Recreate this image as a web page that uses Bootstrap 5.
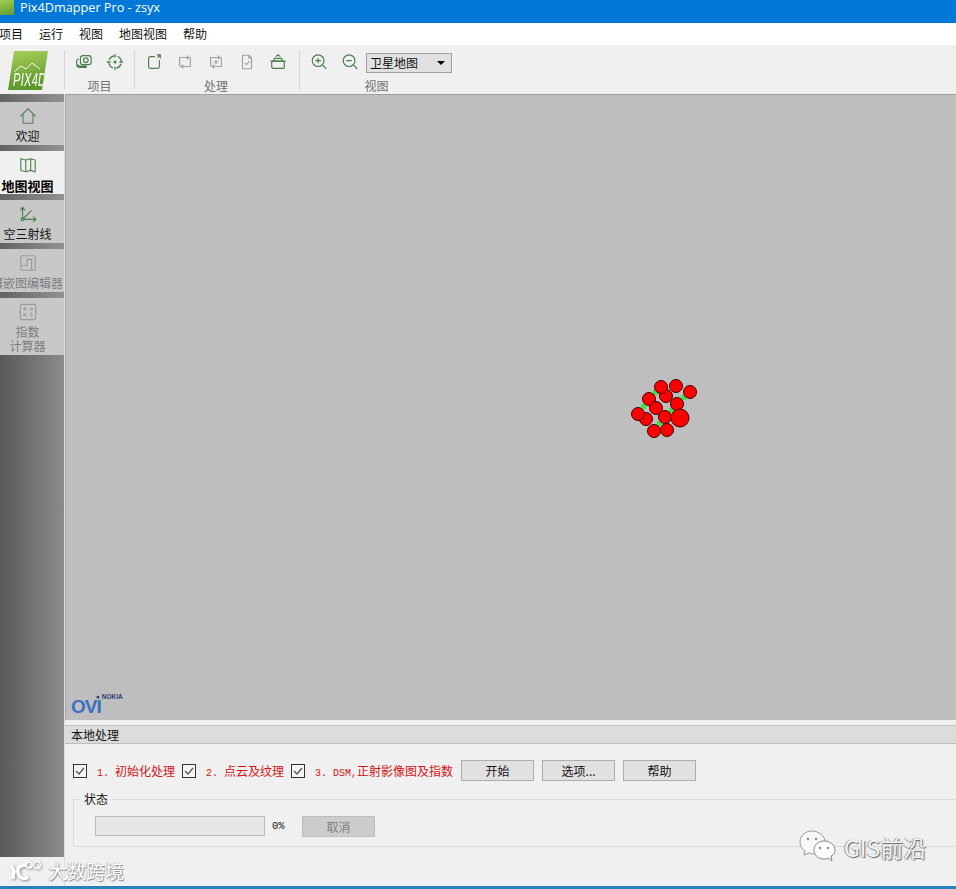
<!DOCTYPE html>
<html lang="zh-CN">
<head>
<meta charset="UTF-8">
<title>Pix4Dmapper Pro - zsyx</title>
<link rel="stylesheet" href="https://cdn.jsdelivr.net/npm/bootstrap@5.3.0/dist/css/bootstrap.min.css">
<style>
html, body { height: 889px; overflow: hidden; }
body { font-family: "Noto Sans CJK SC", "Liberation Sans", sans-serif; font-size: 12px; line-height: 1.2; color: #111; background: #f0f0f0; }
.app-win { height: 889px; position: relative; overflow: hidden; }
.title-strip { height: 23px; background: #0078d7; color: #fff; font-family: "Open Sans", "Liberation Sans", sans-serif; font-size: 12.7px; padding-left: 20px; line-height: 15px; position: relative; }
.title-logo { position: absolute; left: 0; top: 0; width: 14px; height: 15px; background: linear-gradient(160deg, #a5cd55, #5f9a2c); }
.menu-strip { height: 22px; background: #fff; margin-left: -1px; gap: 16px; line-height: 21px; }
.tool-strip { height: 49px; background: #f0f0f0; }
.logo-cell { width: 64px; padding: 6px 0 0 8px; flex: none; }
.logo-box { width: 40px; height: 39px; background: linear-gradient(170deg, #a9cf59, #5d982b 85%); clip-path: polygon(15% 0, 100% 0, 85% 100%, 0 100%); position: relative; overflow: hidden; }
.logo-box svg { position: absolute; left: 6px; top: 10px; }
.logo-word { position: absolute; left: 5px; top: 19px; font-family: "Liberation Sans", sans-serif; color: #fff; font-size: 19px; font-style: italic; transform: scaleX(.58); transform-origin: left; letter-spacing: .5px; line-height: 20px; }
.tool-sep { width: 1px; height: 39px; margin-top: 5px; background: #d4d4d4; flex: none; }
.tool-group { padding-top: 4px; flex: none; }
.tool-icons { height: 30px; }
.tool-slot { width: 31px; height: 26px; flex: none; }
.tool-slot svg { width: 18px; height: 18px; }
.group-cap { color: #707070; text-align: center; line-height: 14px; }
.group-shift { padding-right: 2px; }
.group-pad { padding-left: 3px; }
.map-pick { width: 86px; height: 20px; margin-left: 1px; background: #e1e1e1; border: 1px solid #a0a0a0; padding-left: 3px; line-height: 17px; position: relative; margin-top: 4px; }
.map-pick::after { content: ""; position: absolute; right: 6px; top: 7px; border: 4px solid transparent; border-top: 4px solid #000; border-bottom: 0; }
.main-area { height: 795px; }
.side-rail { width: 64px; height: 763px; flex: none; background: linear-gradient(90deg, #595959, #8b8b8b); }
.rail-line { height: 8px; background: linear-gradient(90deg, #636363, #929292); }
.rail-line.thin { height: 6px; }
.rail-item { height: 43px; background: #c8c8c8; text-align: center; padding: 4px 9px 0 0; white-space: nowrap; overflow: hidden; }
.rail-item.on { background: #f0f0f0; font-weight: 700; color: #000; font-size: 13px; }
.rail-item.off { color: #7d7d7d; }
.rail-item.calc { height: 57px; line-height: 14px; }
.rail-item svg { display: block; margin: 1px auto 4px; width: 18px; height: 18px; }
.rail-item .rail-wide { display: block; margin-left: -9px; width: 72px; }
.work-col { border-left: 1px solid #dedede; min-width: 0; }
.map-view { height: 626px; background: #bebebe; border-top: 1px solid #9f9f9f; border-left: 1px solid #a8a8a8; position: relative; }
.map-dots { position: absolute; left: 0; top: 0; }
.ovi-mark { position: absolute; left: 5px; bottom: 6px; color: #3c6fc2; font-family: "Liberation Sans", sans-serif; font-weight: 700; font-size: 19px; line-height: 14px; letter-spacing: -1px; }
.nokia-mark { position: absolute; left: 30px; bottom: 20px; color: #2c3f72; font-family: "Liberation Sans", sans-serif; font-weight: 700; font-size: 6.5px; line-height: 6px; white-space: nowrap; }
.panel-head { height: 19px; margin-top: 5px; background: #dcdcdc; border-top: 1px solid #c0c0c0; border-bottom: 1px solid #bcbcbc; padding-left: 6px; line-height: 17px; color: #111; }
.run-row { padding: 16px 0 0 8px; height: 55px; }
.win-check.form-check-input { width: 14px; height: 14px; margin: 4px 0 0; flex: none; border: 1px solid #333; border-radius: 0; background-color: #f4f4f4; background-size: 12px; background-image: url("data:image/svg+xml,%3csvg xmlns='http://www.w3.org/2000/svg' viewBox='0 0 12 12'%3e%3cpath d='M2 6l3 3 5-6' fill='none' stroke='%23555' stroke-width='1.3'/%3e%3c/svg%3e"); }
.step-text { color: #d01414; font-family: "Liberation Mono", "Noto Sans CJK SC", monospace; font-size: 10px; white-space: nowrap; margin: 0 7px 0 10px; padding-top: 3px; line-height: 16px; }
.step-text b { font-family: "Noto Sans CJK SC", sans-serif; font-size: 12px; font-weight: 400; }
.step-last { margin-right: 8px; }
.win-btn.btn { width: 73px; height: 21px; padding: 0; font-size: 12px; line-height: 18px; border-radius: 0; background: #e1e1e1; border: 1px solid #adadad; color: #111; }
.win-btn.dim.btn { background: #cccccc; border-color: #bdbdbd; color: #7c7c7c; opacity: 1; }
.state-box { margin: 0 -10px 0 8px; height: 48px; border: 1px solid #dcdcdc; position: relative; padding: 16px 0 0 21px; }
.state-cap { position: absolute; left: 6px; top: -8px; background: #f0f0f0; padding: 0 4px; line-height: 14px; }
.state-bar.progress { width: 170px; height: 20px; border-radius: 0; border: 1px solid #bcbcbc; background: #e6e6e6; }
.state-pct { font-family: "Liberation Mono", monospace; font-size: 10.5px; width: 30px; margin-left: 7px; }
.base-line { position: absolute; left: 0; right: 0; bottom: 0; height: 3px; background: #2a80bd; }
.mark-left { position: absolute; left: 8px; top: 859px; color: #fff; font-size: 19px; line-height: 24px; text-shadow: 1px 1px 1px #8a8a8a, -1px 0 1px #b5b5b5; }
.mark-left svg { filter: drop-shadow(1px 1px 1px #8a8a8a); }
.mark-right { position: absolute; left: 799px; top: 830px; color: #f4f4f4; font-size: 23px; line-height: 32px; text-shadow: 1px 1px 1px #666, -1px 0 1px #999; }
</style>
</head>
<body>
<div class="app-win d-flex flex-column">
  <div class="title-strip"><span class="title-logo"></span>Pix4Dmapper Pro - zsyx</div>
  <div class="menu-strip d-flex">
    <span>项目</span><span>运行</span><span>视图</span><span>地图视图</span><span>帮助</span>
  </div>

  <div class="tool-strip d-flex">
    <div class="logo-cell">
      <div class="logo-box">
        <svg width="30" height="12" viewBox="0 0 30 12"><path d="M0 11l7-6 5 3 6-6 8 6" fill="none" stroke="#fff" stroke-width="1"/></svg>
        <span class="logo-word">PIX4D</span>
      </div>
    </div>
    <div class="tool-sep"></div>
    <div class="tool-group" style="width:69px">
      <div class="tool-icons d-flex justify-content-center">
        <div class="tool-slot d-flex justify-content-center align-items-center"><svg viewBox="0 0 20 20" fill="none" stroke="#4c7d4c" stroke-width="1.3"><rect x="6" y="3" width="12" height="10" rx="3"/><circle cx="12" cy="8" r="2.6"/><path d="M4 6.5c-2 1-2.5 4-2 6 .5 1.5 2 2 4 2h7M2 11.500c-.5 2 0 4.500 3 4.500h8"/></svg></div>
        <div class="tool-slot d-flex justify-content-center align-items-center"><svg viewBox="0 0 20 20" fill="none" stroke="#4c7d4c" stroke-width="1.4"><circle cx="10" cy="10" r="7" stroke-dasharray="7 4" stroke-dashoffset="-2"/><path d="M10 1v4M10 15v4M1 10h4M15 10h4"/><circle cx="10" cy="10" r="1" fill="#4c7d4c"/></svg></div>
      </div>
      <div class="group-cap">项目</div>
    </div>
    <div class="tool-sep"></div>
    <div class="tool-group group-shift" style="width:164px">
      <div class="tool-icons d-flex justify-content-center">
        <div class="tool-slot d-flex justify-content-center align-items-center"><svg viewBox="0 0 20 20" fill="none" stroke="#4c7d4c" stroke-width="1.3"><path d="M11 4H6a2 2 0 0 0-2 2v9a2 2 0 0 0 2 2h8a2 2 0 0 0 2-2V8M13 2h4v4M17 2l-3 3"/></svg></div>
        <div class="tool-slot d-flex justify-content-center align-items-center"><svg viewBox="0 0 20 20" fill="none" stroke="#a2a2a2" stroke-width="1.3"><path d="M6 15H5a1 1 0 0 1-1-1V5h10M14 5h1a1 1 0 0 1 1 1v9H6M12 3l2 2-2 2M8 13l-2 2 2 2"/></svg></div>
        <div class="tool-slot d-flex justify-content-center align-items-center"><svg viewBox="0 0 20 20" fill="none" stroke="#a2a2a2" stroke-width="1.3"><path d="M6 15H5a1 1 0 0 1-1-1V5h10M14 5h1a1 1 0 0 1 1 1v9H6M12 3l2 2-2 2M8 13l-2 2 2 2M10 7.5v5M7.5 10h5"/></svg></div>
        <div class="tool-slot d-flex justify-content-center align-items-center"><svg viewBox="0 0 20 20" fill="none" stroke="#a2a2a2" stroke-width="1.3"><path d="M5 2.500h7l3 3v12H5zM12 2.500v3h3M7.500 11l2 2 3-4"/></svg></div>
        <div class="tool-slot d-flex justify-content-center align-items-center"><svg viewBox="0 0 20 20" fill="none" stroke="#4c7d4c" stroke-width="1.3"><rect x="3" y="9" width="14" height="8" rx="1.5"/><path d="M1.500 9h17M5 9l1-3h8l1 3M7.500 4l2.500-2 2.500 2"/></svg></div>
      </div>
      <div class="group-cap">处理</div>
    </div>
    <div class="tool-sep"></div>
    <div class="tool-group" style="width:153px">
      <div class="tool-icons d-flex group-pad">
        <div class="tool-slot d-flex justify-content-center align-items-center"><svg viewBox="0 0 20 20" fill="none" stroke="#4c7d4c" stroke-width="1.3"><circle cx="9" cy="8.5" r="6.5"/><path d="M14 13.5l4 4M6 8.5h6M9 5.5v6"/></svg></div>
        <div class="tool-slot d-flex justify-content-center align-items-center"><svg viewBox="0 0 20 20" fill="none" stroke="#4c7d4c" stroke-width="1.3"><circle cx="9" cy="8.5" r="6.5"/><path d="M14 13.5l4 4M6 8.5h6"/></svg></div>
        <div class="map-pick">卫星地图</div>
      </div>
      <div class="group-cap">视图</div>
    </div>
  </div>

  <div class="main-area d-flex">
    <div class="side-rail">
      <div class="rail-line"></div>
      <div class="rail-item">
        <svg viewBox="0 0 20 20" fill="none" stroke="#5a7f5a" stroke-width="1.2"><path d="M1.500 10.500L10 2l8.500 8.500M4.500 8v10h11V8"/></svg>欢迎
      </div>
      <div class="rail-line thin"></div>
      <div class="rail-item on">
        <svg viewBox="0 0 20 20" fill="none" stroke="#4c7d4c" stroke-width="1.2"><path d="M2 3l5.500 1.500L13 3l5 1.500v13L13 16l-5.500 1.500L2 16zM7.500 4.500v13M13 3v13"/></svg>地图视图
      </div>
      <div class="rail-line thin"></div>
      <div class="rail-item">
        <svg viewBox="0 0 20 20" fill="none" stroke="#4c7d4c" stroke-width="1.2"><path d="M4 15V3M1.500 6L4 2.500 6.500 6M5 16h14M15.500 13l3.500 3-3.500 3M5 15l9-9"/><rect x="2.500" y="14.500" width="2.500" height="2.500"/></svg>空三射线
      </div>
      <div class="rail-line thin"></div>
      <div class="rail-item off">
        <svg viewBox="0 0 20 20" fill="none" stroke="#9a9a9a" stroke-width="1.2"><rect x="2" y="2" width="16" height="16" rx="1.5"/><path d="M2 13h7V6h5v12"/></svg><span class="rail-wide">镶嵌图编辑器</span>
      </div>
      <div class="rail-line thin"></div>
      <div class="rail-item off calc">
        <svg viewBox="0 0 20 20" fill="none" stroke="#9a9a9a" stroke-width="1.2"><rect x="1.500" y="1.500" width="17" height="17" rx="1.5"/><path d="M4.500 6.500h4M6.500 4.500v4M11.500 5.500h4M11.500 7.500h4M5 11.500l3 3M8 11.500l-3 3M11.500 13h4M13 11h1.500M13 15h1.500"/></svg>
        <div>指数</div>
        <div>计算器</div>
      </div>
    </div>

    <div class="work-col flex-grow-1">
      <div class="map-view">
        <svg class="map-dots" width="890" height="625" viewBox="66 95 890 625">
          <g fill="#3fe03f">
            <rect x="653" y="390" width="5" height="5"/><rect x="641" y="404" width="5" height="5"/><rect x="681" y="395" width="5" height="5"/><rect x="669" y="408" width="5" height="5"/><rect x="657" y="421" width="5" height="5"/>
          </g>
          <g fill="#ff0000" stroke="#400000" stroke-width="1">
            <circle cx="666" cy="396" r="6.5"/><circle cx="661" cy="387" r="6.5"/><circle cx="676" cy="386" r="6.5"/><circle cx="690" cy="392" r="6.5"/><circle cx="649" cy="399" r="6.5"/><circle cx="677" cy="404" r="6.5"/><circle cx="656" cy="408" r="6.5"/><circle cx="646" cy="419" r="6.5"/><circle cx="638" cy="414" r="6.5"/><circle cx="665" cy="417" r="6.5"/><circle cx="680" cy="418" r="9"/><circle cx="654" cy="431" r="6.5"/><circle cx="667" cy="430" r="6.5"/>
          </g>
        </svg>
        <span class="nokia-mark">● NOKIA</span>
        <span class="ovi-mark">OVI</span>
      </div>
      <div class="panel-head">本地处理</div>
      <div class="run-row d-flex align-items-start">
        <input class="win-check form-check-input" type="checkbox" checked>
        <span class="step-text">1. <b>初始化处理</b></span>
        <input class="win-check form-check-input" type="checkbox" checked>
        <span class="step-text">2. <b>点云及纹理</b></span>
        <input class="win-check form-check-input" type="checkbox" checked>
        <span class="step-text step-last">3. DSM,<b>正射影像图及指数</b></span>
        <div class="d-flex gap-2">
          <button class="btn win-btn">开始</button>
          <button class="btn win-btn">选项...</button>
          <button class="btn win-btn">帮助</button>
        </div>
      </div>
      <div class="state-box d-flex align-items-start">
        <span class="state-cap">状态</span>
        <div class="state-bar progress"></div>
        <span class="state-pct pt-1">0%</span>
        <button class="btn win-btn dim" disabled>取消</button>
      </div>
    </div>
  </div>

  <div class="mark-left d-flex align-items-center gap-1">
    <svg width="36" height="22" viewBox="0 0 36 22" fill="none" stroke="#fff" stroke-width="3.5"><path d="M3 5l3 6-1 8M18 5c-6 0-9 3-8 8 1 5 6 7 10 4"/><circle cx="21" cy="5" r="3" stroke-width="1.5"/><circle cx="29" cy="5" r="3.500" stroke-width="1.5"/></svg>
    <span>大数跨境</span>
  </div>
  <div class="mark-right d-flex align-items-center gap-2">
    <svg width="37" height="33" viewBox="0 0 37 33"><path d="M13 1C6 1 1 6 1 12c0 4 2 7 5 9l-1 4 5-2c3 1 5 1 7 1l10-10C26 6 20 1 13 1z" fill="#f8f8f8" stroke="#999"/><path d="M25 11c-6 0-10 4-10 9s4 9 10 9c1 0 3 0 4-1l4 3-1-5c3-1 4-4 4-6 0-5-5-9-11-9z" fill="#fff" stroke="#888"/><g fill="#888"><circle cx="9" cy="9" r="1.2"/><circle cx="17" cy="9" r="1.2"/><circle cx="21" cy="18" r="1.2"/><circle cx="29" cy="18" r="1.2"/></g></svg>
    <span>GIS前沿</span>
  </div>
  <div class="base-line"></div>
</div>
</body>
</html>
